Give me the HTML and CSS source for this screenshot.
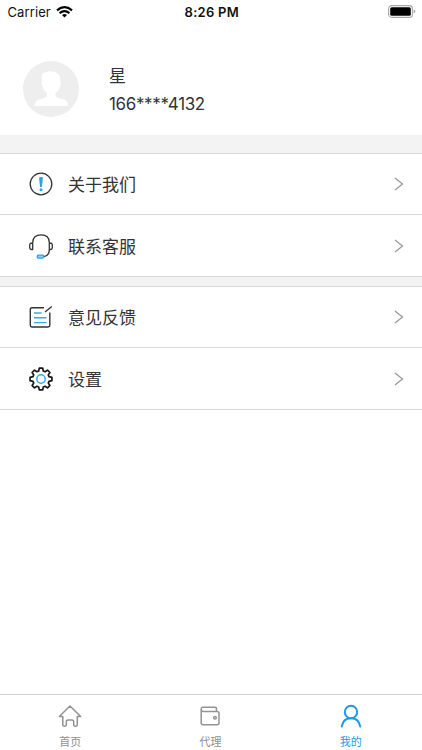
FILE: index.html
```html
<!DOCTYPE html>
<html lang="zh-CN">
<head>
<meta charset="utf-8">
<title>我的</title>
<link rel="stylesheet" href="styles.css">
</head>
<body>
<div class="app">
  <header class="status">
    <div class="carrier"><span>Carrier</span>
      <svg width="17" height="12" viewBox="0 0 17 12" fill="none" stroke="#000" stroke-width="2.2"><path d="M1 4.300Q8.500-2 16 4.300M3.600 7.200Q8.500 3 13.400 7.200"/><path d="M6 9Q8.500 7 11 9L8.500 11.600Z" fill="#000" stroke="none"/></svg>
    </div>
    <div class="time">8:26 PM</div>
    <div class="power">
      <svg width="28" height="13" viewBox="0 0 28 13"><rect x=".6" y=".6" width="23.800" height="11.800" rx="3.200" fill="#fff" stroke="#a6a6a6" stroke-width="1.100"/><rect x="2.200" y="2.200" width="20.600" height="8.600" rx="1.500"/><path d="M25.700 4.500Q27.200 5 27.200 6.500T25.700 8.500Z" fill="#a6a6a6"/></svg>
    </div>
  </header>
  <section class="profile">
    <svg class="avatar" width="56" height="56" viewBox="0 0 56 56"><circle cx="28" cy="28" r="28" fill="#eee"/><path d="M19 19Q18 13 20 11.500Q21 12 22 11.500Q28 9 34 12Q38 14 37.300 21Q38.500 22 37.300 25Q36 30 32.500 32.500V35Q34 37 41 38.500Q45 40 45 45H11.500Q11.500 40 15.500 38.500Q22.500 37 24 35V32.500Q20.500 30 19.400 25Q17.800 22 19 19Z" fill="#fff"/></svg>
    <div class="who"><div class="name">星</div><div class="phone">166****4132</div></div>
  </section>
  <main class="menu">
    <div class="group">
      <div class="row">
        <svg class="icon" viewBox="0 0 24 24" fill="none"><circle cx="12" cy="12" r="10.800" stroke="#333" stroke-width="1.300"/><path d="M10 5.600Q12 4.400 14 5.600L12.900 15H11.100Z" fill="#26a2ee"/><circle cx="12" cy="17.700" r="1.500" fill="#26a2ee"/></svg>
        <span class="label">关于我们</span>
        <svg class="chevron" viewBox="0 0 10 14"><path d="M1 1L8.500 7L1 13"/></svg>
      </div>
      <div class="row">
        <svg class="icon" viewBox="0 0 24 24" fill="none" stroke="#333" stroke-width="1.300"><path d="M3.700 15.500V8.500C3.700 3.500 7 .8 12 .8S20.300 3.500 20.300 8.500V15.500C20.300 19.500 18.500 22 15 22.700M3.700 9Q.7 8.800.7 11V13.500Q.7 15.700 3.700 15.500ZM20.300 9Q23.300 8.800 23.300 11V13.500Q23.300 15.700 20.300 15.500Z"/><rect x="8.200" y="21.200" width="6.600" height="3" rx="1.500" fill="#8fd0fb" stroke="#26a2ee"/></svg>
        <span class="label">联系客服</span>
        <svg class="chevron" viewBox="0 0 10 14"><path d="M1 1L8.500 7L1 13"/></svg>
      </div>
    </div>
    <div class="group">
      <div class="row">
        <svg class="icon" viewBox="0 0 24 24" fill="none" stroke="#333" stroke-width="1.400"><path d="M15 2.700H3Q1.300 2.700 1.300 4.500V20.300Q1.300 22 3 22H19Q20.800 22 20.800 20.300V7.500M16 7L22.800 1.500"/><path d="M5 8H12.500M5 12.800H17.500M5 17.600H17.500" stroke="#39a9ef"/></svg>
        <span class="label">意见反馈</span>
        <svg class="chevron" viewBox="0 0 10 14"><path d="M1 1L8.500 7L1 13"/></svg>
      </div>
      <div class="row">
        <svg class="icon" viewBox="-12 -12 24 24" fill="none"><path d="M-2.300-8L-1.700-10.900H1.700L2.300-8L4.100-7.300L6.500-8.900L8.900-6.500L7.300-4.100L8-2.300L10.900-1.700V1.700L8 2.300L7.300 4.100L8.900 6.500L6.500 8.900L4.100 7.300L2.300 8L1.700 10.900H-1.700L-2.300 8L-4.100 7.300L-6.500 8.900L-8.900 6.500L-7.300 4.100L-8 2.300L-10.900 1.700V-1.700L-8-2.300L-7.300-4.100L-8.900-6.500L-6.500-8.900L-4.100-7.300Z" stroke="#151515" stroke-width="1.700" stroke-linejoin="round"/><circle r="4.200" stroke="#39a9ef" stroke-width="1.500"/></svg>
        <span class="label">设置</span>
        <svg class="chevron" viewBox="0 0 10 14"><path d="M1 1L8.500 7L1 13"/></svg>
      </div>
    </div>
  </main>
  <nav class="tabs">
    <div class="tab">
      <svg viewBox="0 0 24 24"><path d="M4.800 12.500H1.300L12 2L22.700 12.500H19.300V20.500Q19.300 22.200 17.500 22.200T15.700 20.500V17.800Q15.700 16 14 16H10Q8.300 16 8.300 17.800V20.500Q8.300 22.200 6.500 22.200T4.800 20.500Z"/></svg>
      <span>首页</span>
    </div>
    <div class="tab">
      <svg viewBox="0 0 24 24"><path d="M3.200 6.800V5Q3.200 3.300 5 3.300H16.700Q18.500 3.300 18.500 5V7.500M3.200 5.500Q3.200 7.500 5.500 7.500H19Q21 7.500 21 9.500V18.700Q21 20.700 19 20.700H5.200Q3.200 20.700 3.200 18.700V5.500"/><circle cx="17" cy="13.800" r="1.300"/></svg>
      <span>代理</span>
    </div>
    <div class="tab active">
      <svg viewBox="0 0 24 24"><circle cx="12" cy="8" r="6.200"/><path d="M2.700 22.600Q4 14.200 12 14.200T21.300 22.600"/></svg>
      <span>我的</span>
    </div>
  </nav>
</div>
</body>
</html>
```
FILE: styles.css
```css
* { box-sizing: border-box; }
body { margin: 0; background: #fff; color: #333; font-family: Inter, "Noto Sans CJK SC", sans-serif; }
.app { width: 422px; height: 750px; display: flex; flex-direction: column; overflow: hidden; }
svg { display: block; flex: none; overflow: visible; }
.status { height: 24px; padding: 0 6px 0 7.5px; display: grid; grid-template-columns: 1fr auto 1fr; align-items: center; font-size: 13px; line-height: 24px; color: #111; }
.carrier { display: flex; align-items: center; gap: 5px; letter-spacing: .1px; }
.time { font-weight: 600; letter-spacing: .25px; }
.power { justify-self: end; }
.power svg { margin-top: -1px; }
.profile { height: 111px; padding: 37px 0 0 23px; display: flex; gap: 30px; }
.who { padding-top: 1px; font-size: 17px; line-height: 28px; }
.phone { letter-spacing: -.35px; }
.menu { flex: 1; }
.group { border-top: 9px solid #f3f3f3; }
.group:first-child { border-top-width: 18px; }
.row { height: 62px; padding: 0 18px 0 29px; display: flex; align-items: center; border-bottom: 1px solid #d9d9dc; }
.row:first-child { border-top: 1px solid #d9d9dc; }
.icon { width: 24px; height: 24px; }
.label { flex: 1; margin-left: 15px; padding-top: 2px; font-size: 17px; line-height: 24px; }
.chevron { width: 10px; height: 14px; fill: none; stroke: #999; stroke-width: 1.3; }
.tabs { height: 56px; padding-right: 1px; border-top: 1px solid #d0d0d0; display: grid; grid-template-columns: repeat(3, 1fr); }
.tab { display: flex; flex-direction: column; align-items: center; padding-top: 9px; color: #929292; font-size: 11px; line-height: 16px; }
.tab svg { width: 24px; height: 24px; margin-bottom: 6px; fill: none; stroke: currentColor; stroke-width: 1.5; stroke-linejoin: round; stroke-linecap: round; }
.tab.active { color: #1c9be8; }
.tab.active svg { stroke-width: 2; }
```
